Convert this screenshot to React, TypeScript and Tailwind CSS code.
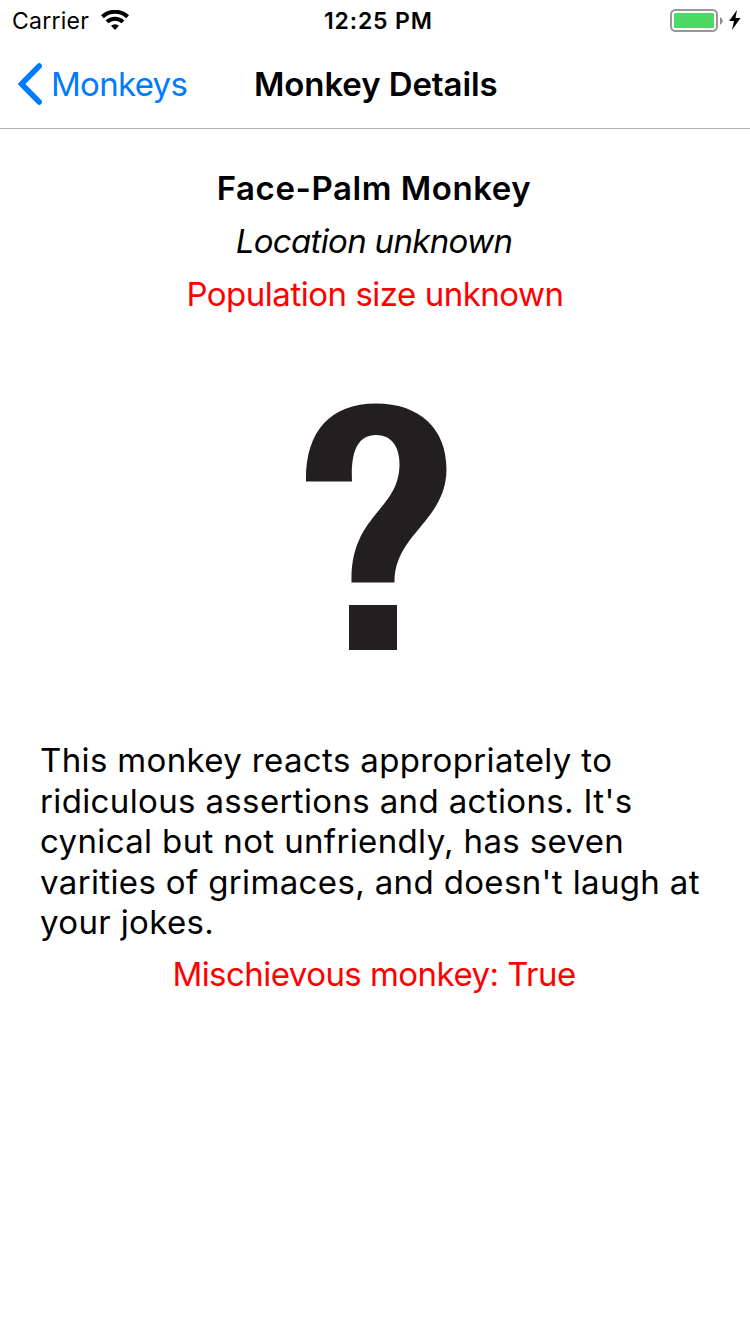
function StatusBar() {
  return (
    <div className="flex h-10 items-center justify-between pt-px pr-[9px] pl-3">
      <div className="flex w-[312px] items-center gap-[12px]">
        <span className="text-[23px] leading-10 tracking-[0.25px]">Carrier</span>
        <svg className="-mt-px" width="28" height="20" viewBox="0 0 28 20" fill="none" stroke="#000" strokeWidth="4">
          <path d="M1.400 6.700a18.500 18.500 0 0 1 25.200 0" />
          <path d="M6 11.900a11.700 11.700 0 0 1 16 0" />
          <path d="M14 20l-4-4.2a5.800 5.800 0 0 1 8 0z" fill="#000" stroke="none" />
        </svg>
      </div>
      <span className="flex-1 text-[23px] leading-10 font-semibold tracking-[0.85px]">12:25 PM</span>
      <div className="flex items-center gap-[6px]">
        <svg width="53" height="24" viewBox="0 0 53 24">
          <rect x="1" y="1" width="46" height="21" rx="4.500" fill="none" stroke="#999" strokeWidth="2" />
          <rect x="4" y="4" width="40" height="15" rx="1.500" fill="#4cd964" />
          <path d="M50 8Q55.500 11.500 50 16z" fill="#8c8c8c" />
        </svg>
        <svg className="-mt-px" width="12" height="20" viewBox="0 0 12 20">
          <path d="M8 0L0 11h5L3 20l8.500-12H6.500z" />
        </svg>
      </div>
    </div>
  );
}

function NavigationBar() {
  return (
    <header className="grid h-[89px] grid-cols-[254px_1fr] items-center border-b border-[#b2b2b2]">
      <button className="flex items-center gap-[8px] pl-[17px] text-[33px] leading-10 tracking-[-0.7px] text-[#007aff]">
        <svg width="26" height="42" viewBox="0 0 26 42" fill="none" stroke="#007aff" strokeWidth="5.5" strokeLinecap="round">
          <path d="M22.200 3L4.500 21l17.700 18" />
        </svg>
        <span>Monkeys</span>
      </button>
      <h1 className="text-[33px] leading-10 font-semibold tracking-[-0.1px]">Monkey Details</h1>
    </header>
  );
}

export default function App() {
  return (
    <div className="min-h-[1334px] w-[750px] overflow-hidden bg-white font-['Inter',sans-serif] text-black">
      <StatusBar />
      <NavigationBar />
      <main className="flex flex-col items-center px-10 pt-[39px] text-[33px]">
        <h2 className="pr-[2px] leading-[41px] font-semibold tracking-[0.56px]">Face-Palm Monkey</h2>
        <p className="mt-3 pr-[2px] leading-[41px] tracking-[-0.68px] italic">Location unknown</p>
        <p className="mt-3 leading-[41px] tracking-[-0.48px] text-[#f00]">Population size unknown</p>
        <svg className="mt-[39px]" width="400" height="360" viewBox="175 354 400 360" fill="#231f20">
          <path d="M306 481.500C305 433 329 403.500 376 403.500C420 403.500 446.500 429 446.500 469C446.500 521 394 534 394.500 582.500H351.500C350 514 399.500 511 399.500 464C399.500 446 391 435 376 435C358 435 350.500 451 352 481.500Z" />
          <path d="M349 605h48v45h-48z" />
        </svg>
        <p className="mt-[26px] w-full text-left leading-[40.5px] tracking-[0.36px] whitespace-nowrap">
          This monkey reacts appropriately to<br />
          ridiculous assertions and actions. It's<br />
          cynical but not unfriendly, has seven<br />
          varities of grimaces, and doesn't laugh at<br />
          your jokes.
        </p>
        <p className="mt-[11px] pr-[2px] leading-[41px] tracking-[-0.54px] text-[#f00]">Mischievous monkey: True</p>
      </main>
    </div>
  );
}
